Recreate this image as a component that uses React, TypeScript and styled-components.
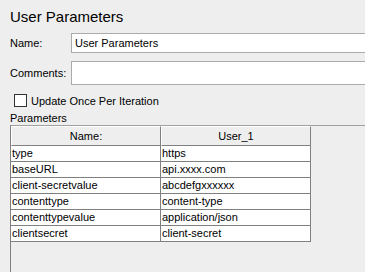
import React from "react";
import styled, { createGlobalStyle } from "styled-components";

const Global = createGlobalStyle`
  html, body {
    margin: 0;
    padding: 0;
    background: #eeeeee;
    overflow: hidden;
  }
  body {
    font-family: "Liberation Sans", Arial, sans-serif;
    font-size: 11px;
    color: #000;
  }
`;

const Panel = styled.div`
  width: 365px;
  height: 272px;
  display: flex;
  flex-direction: column;
  padding: 6px 0 0 10px;
  box-sizing: border-box;
  overflow: hidden;
`;

const Title = styled.div`
  font-size: 15px;
  line-height: 22px;
  height: 22px;
`;

const FieldRow = styled.div<{ $h: number; $mt: number }>`
  display: grid;
  grid-template-columns: 61px 1fr;
  align-items: center;
  height: ${(p) => p.$h}px;
  margin-top: ${(p) => p.$mt}px;
`;

const Label = styled.label`
  font-size: 11px;
`;

const TextField = styled.div<{ $h: number }>`
  height: ${(p) => p.$h}px;
  box-sizing: border-box;
  background: #fff;
  border: 1px solid #ababab;
  border-right: none;
  display: flex;
  align-items: center;
  padding-left: 3px;
  font-size: 11px;
`;

const CheckRow = styled.div`
  display: flex;
  align-items: center;
  gap: 4px;
  margin: 9px 0 0 4px;
  height: 13px;
  font-size: 11px;
`;

const Box = styled.span`
  width: 13px;
  height: 13px;
  box-sizing: border-box;
  border: 1px solid #333;
  background: #fff;
`;

const Section = styled.div`
  margin-top: 4px;
  height: 14px;
  line-height: 14px;
  font-size: 11px;
`;

const ScrollPane = styled.div`
  flex: 1;
  border-left: 1px solid #808080;
  border-top: 1px solid #a0a0a0;
  background: #eeeeee;
`;

const Grid = styled.div`
  display: grid;
  grid-template-columns: 150px 150px;
  width: 300px;
  font-size: 11px;
`;

const HeadCell = styled.div`
  height: 20px;
  box-sizing: border-box;
  display: flex;
  align-items: center;
  justify-content: center;
  background: #eeeeee;
  border-top: 1px solid #ffffff;
  border-left: 1px solid #ffffff;
  border-right: 1px solid #808080;
  border-bottom: 1px solid #808080;
`;

const Cell = styled.div`
  height: 16px;
  box-sizing: border-box;
  background: #fff;
  border-right: 1px solid #808080;
  border-bottom: 1px solid #808080;
  padding-left: 1px;
  line-height: 15px;
  white-space: nowrap;
  overflow: hidden;
`;

const rows: [string, string][] = [
  ["type", "https"],
  ["baseURL", "api.xxxx.com"],
  ["client-secretvalue", "abcdefgxxxxxx"],
  ["contenttype", "content-type"],
  ["contenttypevalue", "application/json"],
  ["clientsecret", "client-secret"],
];

export default function App() {
  return (
    <>
      <Global />
      <Panel>
        <Title>User Parameters</Title>
        <FieldRow $h={20} $mt={5}>
          <Label>Name:</Label>
          <TextField $h={20}>User Parameters</TextField>
        </FieldRow>
        <FieldRow $h={24} $mt={8}>
          <Label>Comments:</Label>
          <TextField $h={24} />
        </FieldRow>
        <CheckRow>
          <Box />
          <span>Update Once Per Iteration</span>
        </CheckRow>
        <Section>Parameters</Section>
        <ScrollPane>
          <Grid>
            <HeadCell>Name:</HeadCell>
            <HeadCell>User_1</HeadCell>
            {rows.map(([k, v]) => (
              <React.Fragment key={k}>
                <Cell>{k}</Cell>
                <Cell>{v}</Cell>
              </React.Fragment>
            ))}
          </Grid>
        </ScrollPane>
      </Panel>
    </>
  );
}
